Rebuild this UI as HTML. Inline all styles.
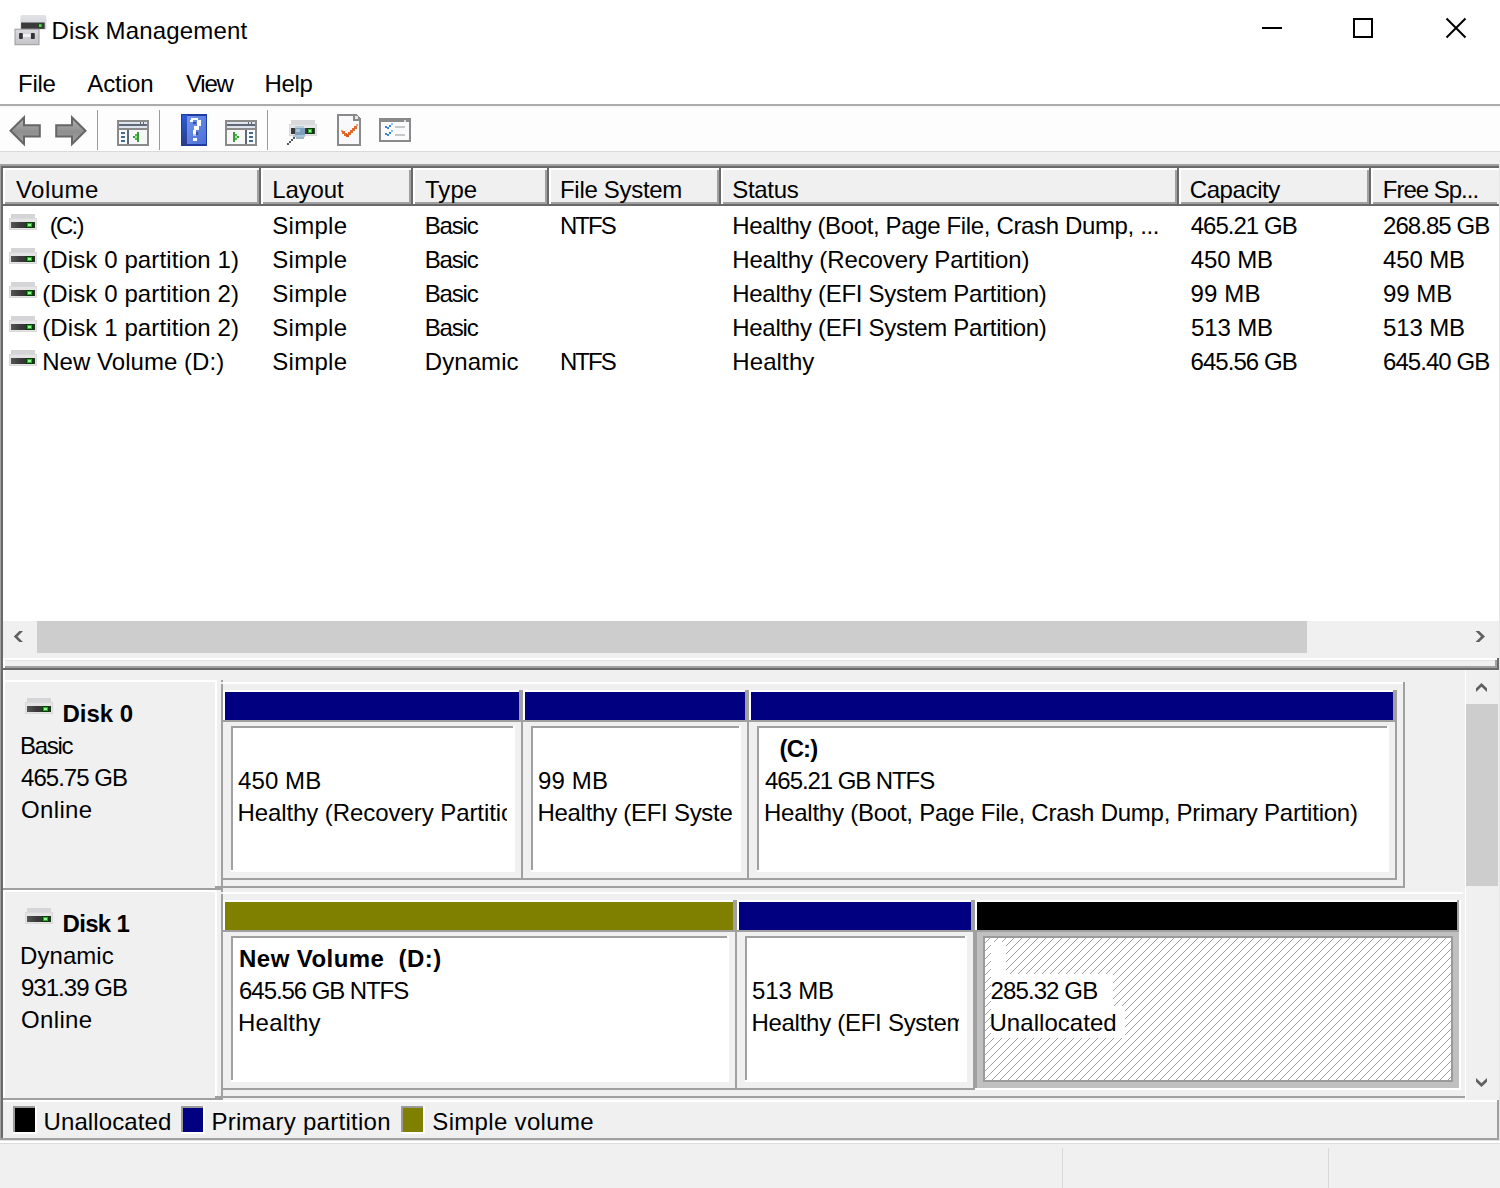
<!DOCTYPE html>
<html><head><meta charset="utf-8"><style>
html,body{margin:0;padding:0;}
body{width:1500px;height:1188px;position:relative;overflow:hidden;background:#fff;font-family:"Liberation Sans",sans-serif;font-size:24px;color:#000;}
body>div{position:absolute;}
.t{line-height:32px;white-space:pre;}
</style></head><body>
<div style="left:0px;top:0px;width:1500px;height:104px;background:#ffffff;"></div>
<svg style="position:absolute;left:14px;top:14px" width="34" height="32">
<defs><linearGradient id="tg1" x1="0" y1="0" x2="0" y2="1"><stop offset="0" stop-color="#e2e3e6"/><stop offset="1" stop-color="#cfd0d4"/></linearGradient>
<linearGradient id="tg2" x1="0" y1="0" x2="0" y2="1"><stop offset="0" stop-color="#dcdce0"/><stop offset="1" stop-color="#c4c4c8"/></linearGradient></defs>
<rect x="6.4" y="1" width="26" height="14.5" rx="1.5" fill="url(#tg1)"/>
<rect x="7.1" y="8.5" width="23.6" height="6.4" fill="#3a3a3a"/>
<rect x="24" y="9.5" width="4.5" height="4" fill="#145214"/>
<rect x="25" y="10.3" width="2.6" height="2.6" fill="#6fd66f"/>
<rect x="1" y="15.2" width="24" height="15.5" fill="url(#tg2)" stroke="#9c9c9c" stroke-width="1"/>
<rect x="9" y="20" width="8" height="3" fill="#f2f2f4"/>
<rect x="5.1" y="18.9" width="3.7" height="6.1" rx="0.8" fill="#333"/>
<rect x="16.9" y="18.9" width="3.9" height="6.1" rx="0.8" fill="#333"/>
</svg>
<div class="t" id="t0" style="left:51.50px;top:15px;letter-spacing:0.157px;">Disk Management</div>
<div style="left:1262px;top:27px;width:20px;height:2px;background:#000;"></div>
<div style="left:1353px;top:18px;width:16px;height:16px;border:2px solid #000"></div>
<svg style="position:absolute;left:1444px;top:16px" width="24" height="24"><path d="M2.5 2.5 L21.5 21.5 M21.5 2.5 L2.5 21.5" stroke="#000" stroke-width="2" fill="none"/></svg>
<div class="t" id="t1" style="left:18.10px;top:68px;letter-spacing:-0.333px;">File</div>
<div class="t" id="t2" style="left:87.30px;top:68px;letter-spacing:-0.100px;">Action</div>
<div class="t" id="t3" style="left:186.00px;top:68px;letter-spacing:-1.233px;">View</div>
<div class="t" id="t4" style="left:264.40px;top:68px;letter-spacing:-0.333px;">Help</div>
<div style="left:0px;top:104px;width:1500px;height:2px;background:#ababab;"></div>
<div style="left:0px;top:106px;width:1500px;height:45px;background:#fdfdfd;"></div>
<div style="left:0px;top:106px;width:1500px;height:2px;background:#f8f8fb;"></div>
<div style="left:0px;top:151px;width:1500px;height:1px;background:#dadada;"></div>
<div style="left:0px;top:152px;width:1500px;height:12px;background:#f0f0f0;"></div>
<div style="left:97px;top:110px;width:1px;height:40px;background:#9a9a9a;"></div>
<div style="left:159px;top:110px;width:1px;height:40px;background:#9a9a9a;"></div>
<div style="left:267px;top:110px;width:1px;height:40px;background:#9a9a9a;"></div>
<svg style="position:absolute;left:0;top:108px" width="100" height="44">
<defs><linearGradient id="ag" x1="0" y1="0" x2="0" y2="1"><stop offset="0" stop-color="#b4b4b4"/><stop offset="0.55" stop-color="#8e8e8e"/><stop offset="1" stop-color="#a8a8a8"/></linearGradient></defs>
<path d="M10.5 22.7 L24 9.5 L24 17.2 L39.8 17.2 L39.8 28.5 L24 28.5 L24 36 Z" fill="url(#ag)" stroke="#666" stroke-width="2"/>
<path d="M85.5 22.7 L72 9.5 L72 17.2 L56.2 17.2 L56.2 28.5 L72 28.5 L72 36 Z" fill="url(#ag)" stroke="#666" stroke-width="2"/>
</svg>
<svg style="position:absolute;left:117px;top:120px" width="32" height="26" shape-rendering="crispEdges"><rect x="0" y="0" width="32" height="26" fill="#8a8a8a"/><rect x="2" y="2" width="28" height="2" fill="#dfe4ec"/><rect x="23" y="2" width="1.2" height="2" fill="#5f6878"/><rect x="26.2" y="2" width="1.2" height="2" fill="#5f6878"/><rect x="2" y="4" width="28" height="2" fill="#5f6878"/><rect x="2" y="6" width="28" height="2" fill="#dfe4ec"/><rect x="2" y="10" width="8" height="14" fill="#f6f9fd"/><rect x="10" y="10" width="2" height="14" fill="#5f6878"/><rect x="12" y="10" width="18" height="14" fill="#f7f7f7"/><rect x="4" y="12" width="3.6" height="2" fill="#45698f"/><rect x="4" y="16" width="3.6" height="2" fill="#45698f"/><rect x="4" y="20" width="3.6" height="2" fill="#45698f"/><rect x="20" y="12" width="2" height="10" fill="#3c963c"/><rect x="18" y="14" width="2" height="6" fill="#4cb84c"/><rect x="16" y="16" width="2" height="2" fill="#3c963c"/><rect x="18" y="16" width="2" height="2" fill="#90ee90"/></svg>
<svg style="position:absolute;left:225px;top:120px" width="32" height="26" shape-rendering="crispEdges"><rect x="0" y="0" width="32" height="26" fill="#8a8a8a"/><rect x="2" y="2" width="28" height="2" fill="#dfe4ec"/><rect x="23" y="2" width="1.2" height="2" fill="#5f6878"/><rect x="26.2" y="2" width="1.2" height="2" fill="#5f6878"/><rect x="2" y="4" width="28" height="2" fill="#5f6878"/><rect x="2" y="6" width="28" height="2" fill="#dfe4ec"/><rect x="2" y="10" width="18" height="14" fill="#f7f7f7"/><rect x="20" y="10" width="2" height="14" fill="#5f6878"/><rect x="22" y="10" width="8" height="14" fill="#f6f9fd"/><rect x="24" y="12" width="3.6" height="2" fill="#45698f"/><rect x="24" y="16" width="3.6" height="2" fill="#45698f"/><rect x="24" y="20" width="3.6" height="2" fill="#45698f"/><rect x="8" y="12" width="2" height="10" fill="#3c963c"/><rect x="10" y="14" width="2" height="6" fill="#4cb84c"/><rect x="12" y="16" width="2" height="2" fill="#3c963c"/><rect x="10" y="16" width="2" height="2" fill="#90ee90"/></svg>
<svg style="position:absolute;left:181px;top:114px" width="26" height="32" shape-rendering="crispEdges">
<defs><linearGradient id="hg1" x1="0" y1="0" x2="0" y2="1"><stop offset="0" stop-color="#2d5ad8"/><stop offset="1" stop-color="#2a3c86"/></linearGradient>
<linearGradient id="hg2" x1="0" y1="0" x2="1" y2="1"><stop offset="0" stop-color="#7494ee"/><stop offset="1" stop-color="#4a6fd6"/></linearGradient></defs>
<rect x="0" y="0" width="26" height="32" fill="#1f3c9e"/>
<rect x="1" y="1" width="5" height="30" fill="url(#hg1)"/>
<rect x="6" y="2" width="19" height="28" fill="url(#hg2)"/>
<rect x="9.5" y="4" width="7.5" height="2" fill="#fff"/>
<rect x="9" y="6" width="3" height="2" fill="#fff"/>
<rect x="12" y="8" width="3" height="2" fill="#3b4f9a"/>
<rect x="16" y="6" width="4" height="6" fill="#fff"/>
<rect x="13" y="12" width="5" height="4" fill="#fff"/>
<rect x="12" y="16" width="3" height="4" fill="#fff"/>
<rect x="15" y="18" width="2" height="3" fill="#3b4f9a"/>
<rect x="12" y="20" width="3" height="2" fill="#b8c6f0"/>
<rect x="12" y="24" width="4" height="3" fill="#fff"/>
</svg>
<svg style="position:absolute;left:282px;top:114px" width="40" height="36" shape-rendering="crispEdges">
<rect x="9" y="6" width="24" height="4.3" fill="#d9d9dd"/>
<rect x="7" y="10.3" width="28" height="11.4" fill="#dadada"/>
<rect x="8" y="11" width="26" height="10" fill="#e6e6e8"/>
<rect x="9" y="14" width="24" height="5.7" fill="#3a3a3c"/>
<rect x="25" y="14" width="7" height="5.7" fill="#0b3d0b"/>
<rect x="26" y="15" width="4" height="3.5" fill="#2fb02f"/>
<rect x="27" y="16" width="2" height="2" fill="#8cff8c"/>
<rect x="13" y="12" width="9" height="2" fill="#b9cfe0"/>
<rect x="13" y="14" width="10" height="7" fill="#7f9fba"/>
<rect x="14" y="14.5" width="4" height="3" fill="#a8c6de"/>
<rect x="11" y="21" width="12" height="2" fill="#a9c4da"/>
<rect x="14" y="23" width="8" height="2" fill="#9fb4c4"/>
<rect x="11" y="23" width="2" height="2" fill="#555a60"/>
<rect x="9" y="25" width="2" height="2" fill="#555a60"/>
<rect x="7" y="27" width="2" height="2" fill="#555a60"/>
<rect x="5" y="29" width="2" height="2" fill="#555a60"/>
</svg>
<svg style="position:absolute;left:337px;top:114px" width="24" height="32" shape-rendering="crispEdges">
<path d="M0 0 H19.5 L24 4.5 V32 H0 Z" fill="#8a8a8a"/>
<rect x="2" y="2" width="14" height="28" fill="#f9f9fb"/>
<rect x="16" y="7" width="6" height="23" fill="#f9f9fb"/>
<rect x="18" y="2" width="3" height="3" fill="#e8e8e8"/>
<rect x="4" y="16" width="2" height="2" fill="#f0a070"/>
<rect x="5" y="17" width="3" height="3" fill="#e26a2a"/>
<rect x="7" y="19" width="3" height="3" fill="#e26a2a"/>
<rect x="9" y="20" width="3" height="3" fill="#d85a1a"/>
<rect x="11" y="18" width="3" height="3" fill="#e26a2a"/>
<rect x="13" y="16" width="3" height="3" fill="#e26a2a"/>
<rect x="15" y="14" width="3" height="3" fill="#e26a2a"/>
<rect x="17" y="12" width="3" height="3" fill="#e26a2a"/>
<rect x="19" y="10" width="2" height="2" fill="#f0a070"/>
</svg>
<svg style="position:absolute;left:379px;top:118px" width="32" height="24" shape-rendering="crispEdges">
<rect x="0" y="0" width="32" height="23.6" fill="#8a8a8a"/>
<rect x="2" y="4" width="28" height="17.6" fill="#fbfbfd"/>
<rect x="25" y="2" width="2" height="2" fill="#dcdcdc"/>
<rect x="6" y="8" width="2" height="2" fill="#3a86d4"/><rect x="8" y="9" width="2" height="2" fill="#3a86d4"/><rect x="10" y="7" width="2" height="2" fill="#3a86d4"/><rect x="12" y="5" width="2" height="2" fill="#8ec0ee"/>
<rect x="6" y="15" width="2" height="2" fill="#3a86d4"/><rect x="8" y="16" width="2" height="2" fill="#3a86d4"/><rect x="10" y="14" width="2" height="2" fill="#3a86d4"/><rect x="12" y="12" width="2" height="2" fill="#8ec0ee"/>
<rect x="16" y="8" width="10" height="2" fill="#c8c8c8"/>
<rect x="16" y="16" width="10" height="2" fill="#c8c8c8"/>
</svg>
<div style="left:0px;top:164px;width:1500px;height:2px;background:#a0a0a0;"></div>
<div style="left:0px;top:166px;width:1500px;height:2px;background:#696969;"></div>
<div style="left:0px;top:164px;width:1px;height:506px;background:#a0a0a0;"></div>
<div style="left:1px;top:166px;width:2px;height:504px;background:#696969;"></div>
<div style="left:3px;top:168px;width:1496px;height:490px;background:#ffffff;"></div>
<div style="left:1499px;top:164px;width:1px;height:1024px;background:#e6e6e6;"></div>
<div style="left:3px;top:168px;width:258px;height:38px;background:#f0f0f0;"></div>
<div style="left:3px;top:168px;width:258px;height:2px;background:#ffffff;"></div>
<div style="left:3px;top:168px;width:2px;height:38px;background:#ffffff;"></div>
<div style="left:257px;top:170px;width:2px;height:34px;background:#a0a0a0;"></div>
<div style="left:259px;top:168px;width:2px;height:38px;background:#696969;"></div>
<div style="left:5px;top:202px;width:254px;height:2px;background:#a0a0a0;"></div>
<div style="left:3px;top:204px;width:258px;height:2px;background:#696969;"></div>
<div style="left:261px;top:168px;width:152px;height:38px;background:#f0f0f0;"></div>
<div style="left:261px;top:168px;width:152px;height:2px;background:#ffffff;"></div>
<div style="left:261px;top:168px;width:2px;height:38px;background:#ffffff;"></div>
<div style="left:409px;top:170px;width:2px;height:34px;background:#a0a0a0;"></div>
<div style="left:411px;top:168px;width:2px;height:38px;background:#696969;"></div>
<div style="left:263px;top:202px;width:148px;height:2px;background:#a0a0a0;"></div>
<div style="left:261px;top:204px;width:152px;height:2px;background:#696969;"></div>
<div style="left:413px;top:168px;width:136px;height:38px;background:#f0f0f0;"></div>
<div style="left:413px;top:168px;width:136px;height:2px;background:#ffffff;"></div>
<div style="left:413px;top:168px;width:2px;height:38px;background:#ffffff;"></div>
<div style="left:545px;top:170px;width:2px;height:34px;background:#a0a0a0;"></div>
<div style="left:547px;top:168px;width:2px;height:38px;background:#696969;"></div>
<div style="left:415px;top:202px;width:132px;height:2px;background:#a0a0a0;"></div>
<div style="left:413px;top:204px;width:136px;height:2px;background:#696969;"></div>
<div style="left:549px;top:168px;width:172px;height:38px;background:#f0f0f0;"></div>
<div style="left:549px;top:168px;width:172px;height:2px;background:#ffffff;"></div>
<div style="left:549px;top:168px;width:2px;height:38px;background:#ffffff;"></div>
<div style="left:717px;top:170px;width:2px;height:34px;background:#a0a0a0;"></div>
<div style="left:719px;top:168px;width:2px;height:38px;background:#696969;"></div>
<div style="left:551px;top:202px;width:168px;height:2px;background:#a0a0a0;"></div>
<div style="left:549px;top:204px;width:172px;height:2px;background:#696969;"></div>
<div style="left:721px;top:168px;width:458px;height:38px;background:#f0f0f0;"></div>
<div style="left:721px;top:168px;width:458px;height:2px;background:#ffffff;"></div>
<div style="left:721px;top:168px;width:2px;height:38px;background:#ffffff;"></div>
<div style="left:1175px;top:170px;width:2px;height:34px;background:#a0a0a0;"></div>
<div style="left:1177px;top:168px;width:2px;height:38px;background:#696969;"></div>
<div style="left:723px;top:202px;width:454px;height:2px;background:#a0a0a0;"></div>
<div style="left:721px;top:204px;width:458px;height:2px;background:#696969;"></div>
<div style="left:1179px;top:168px;width:192px;height:38px;background:#f0f0f0;"></div>
<div style="left:1179px;top:168px;width:192px;height:2px;background:#ffffff;"></div>
<div style="left:1179px;top:168px;width:2px;height:38px;background:#ffffff;"></div>
<div style="left:1367px;top:170px;width:2px;height:34px;background:#a0a0a0;"></div>
<div style="left:1369px;top:168px;width:2px;height:38px;background:#696969;"></div>
<div style="left:1181px;top:202px;width:188px;height:2px;background:#a0a0a0;"></div>
<div style="left:1179px;top:204px;width:192px;height:2px;background:#696969;"></div>
<div style="left:1371px;top:168px;width:128px;height:38px;background:#f0f0f0;"></div>
<div style="left:1371px;top:168px;width:128px;height:2px;background:#ffffff;"></div>
<div style="left:1371px;top:168px;width:2px;height:38px;background:#ffffff;"></div>
<div style="left:1373px;top:202px;width:124px;height:2px;background:#a0a0a0;"></div>
<div style="left:1371px;top:204px;width:128px;height:2px;background:#696969;"></div>
<div class="t" id="t5" style="left:16.00px;top:174px;letter-spacing:0.440px;">Volume</div>
<div class="t" id="t6" style="left:272.20px;top:174px;letter-spacing:-0.100px;">Layout</div>
<div class="t" id="t7" style="left:425.00px;top:174px;letter-spacing:0.033px;">Type</div>
<div class="t" id="t8" style="left:560.00px;top:174px;letter-spacing:-0.300px;">File System</div>
<div class="t" id="t9" style="left:732.20px;top:174px;letter-spacing:-0.300px;">Status</div>
<div class="t" id="t10" style="left:1189.70px;top:174px;letter-spacing:-0.386px;">Capacity</div>
<div class="t" id="t11" style="left:1382.80px;top:174px;letter-spacing:-1.011px;">Free Sp...</div>
<div style="left:11px;top:214px;width:24px;height:4px;background:#d5d5d8;"></div>
<div style="left:9px;top:218px;width:28px;height:12px;background:#d9d9d9;"></div>
<div style="left:10px;top:219px;width:26px;height:10px;background:#e4e4e6;"></div>
<div style="left:11px;top:222px;width:24px;height:6px;background:#3c3c3e;background:linear-gradient(90deg,#555,#3a3a3a 40%,#2a2a2a)"></div>
<div style="left:26px;top:222px;width:7px;height:6px;background:#0c3c0c;"></div>
<div style="left:27px;top:223px;width:5px;height:4px;background:#2ea82e;"></div>
<div style="left:28px;top:224px;width:3px;height:2px;background:#8cff8c;"></div>
<div class="t" id="t12" style="left:45.00px;top:210px;letter-spacing:-1.800px;"> (C:)</div>
<div class="t" id="t13" style="left:272.20px;top:210px;letter-spacing:0.300px;">Simple</div>
<div class="t" id="t14" style="left:424.80px;top:210px;letter-spacing:-1.200px;">Basic</div>
<div class="t" id="t15" style="left:560.00px;top:210px;letter-spacing:-1.967px;">NTFS</div>
<div class="t" id="t16" style="left:732.20px;top:210px;letter-spacing:-0.355px;">Healthy (Boot, Page File, Crash Dump, ...</div>
<div class="t" id="t17" style="left:1190.70px;top:210px;letter-spacing:-0.975px;">465.21 GB</div>
<div class="t" id="t18" style="left:1383.00px;top:210px;letter-spacing:-0.937px;">268.85 GB</div>
<div style="left:11px;top:248px;width:24px;height:4px;background:#d5d5d8;"></div>
<div style="left:9px;top:252px;width:28px;height:12px;background:#d9d9d9;"></div>
<div style="left:10px;top:253px;width:26px;height:10px;background:#e4e4e6;"></div>
<div style="left:11px;top:256px;width:24px;height:6px;background:#3c3c3e;background:linear-gradient(90deg,#555,#3a3a3a 40%,#2a2a2a)"></div>
<div style="left:26px;top:256px;width:7px;height:6px;background:#0c3c0c;"></div>
<div style="left:27px;top:257px;width:5px;height:4px;background:#2ea82e;"></div>
<div style="left:28px;top:258px;width:3px;height:2px;background:#8cff8c;"></div>
<div class="t" id="t19" style="left:42.20px;top:244px;letter-spacing:0.111px;">(Disk 0 partition 1)</div>
<div class="t" id="t20" style="left:272.20px;top:244px;letter-spacing:0.300px;">Simple</div>
<div class="t" id="t21" style="left:424.80px;top:244px;letter-spacing:-1.200px;">Basic</div>
<div class="t" id="t22" style="left:732.20px;top:244px;letter-spacing:-0.107px;">Healthy (Recovery Partition)</div>
<div class="t" id="t23" style="left:1190.70px;top:244px;letter-spacing:-0.060px;">450 MB</div>
<div class="t" id="t24" style="left:1383.00px;top:244px;letter-spacing:-0.120px;">450 MB</div>
<div style="left:11px;top:282px;width:24px;height:4px;background:#d5d5d8;"></div>
<div style="left:9px;top:286px;width:28px;height:12px;background:#d9d9d9;"></div>
<div style="left:10px;top:287px;width:26px;height:10px;background:#e4e4e6;"></div>
<div style="left:11px;top:290px;width:24px;height:6px;background:#3c3c3e;background:linear-gradient(90deg,#555,#3a3a3a 40%,#2a2a2a)"></div>
<div style="left:26px;top:290px;width:7px;height:6px;background:#0c3c0c;"></div>
<div style="left:27px;top:291px;width:5px;height:4px;background:#2ea82e;"></div>
<div style="left:28px;top:292px;width:3px;height:2px;background:#8cff8c;"></div>
<div class="t" id="t25" style="left:42.20px;top:278px;letter-spacing:0.111px;">(Disk 0 partition 2)</div>
<div class="t" id="t26" style="left:272.20px;top:278px;letter-spacing:0.300px;">Simple</div>
<div class="t" id="t27" style="left:424.80px;top:278px;letter-spacing:-1.200px;">Basic</div>
<div class="t" id="t28" style="left:732.20px;top:278px;letter-spacing:-0.279px;">Healthy (EFI System Partition)</div>
<div class="t" id="t29" style="left:1190.50px;top:278px;letter-spacing:0.150px;">99 MB</div>
<div class="t" id="t30" style="left:1383.00px;top:278px;letter-spacing:-0.050px;">99 MB</div>
<div style="left:11px;top:316px;width:24px;height:4px;background:#d5d5d8;"></div>
<div style="left:9px;top:320px;width:28px;height:12px;background:#d9d9d9;"></div>
<div style="left:10px;top:321px;width:26px;height:10px;background:#e4e4e6;"></div>
<div style="left:11px;top:324px;width:24px;height:6px;background:#3c3c3e;background:linear-gradient(90deg,#555,#3a3a3a 40%,#2a2a2a)"></div>
<div style="left:26px;top:324px;width:7px;height:6px;background:#0c3c0c;"></div>
<div style="left:27px;top:325px;width:5px;height:4px;background:#2ea82e;"></div>
<div style="left:28px;top:326px;width:3px;height:2px;background:#8cff8c;"></div>
<div class="t" id="t31" style="left:42.20px;top:312px;letter-spacing:0.111px;">(Disk 1 partition 2)</div>
<div class="t" id="t32" style="left:272.20px;top:312px;letter-spacing:0.300px;">Simple</div>
<div class="t" id="t33" style="left:424.80px;top:312px;letter-spacing:-1.200px;">Basic</div>
<div class="t" id="t34" style="left:732.20px;top:312px;letter-spacing:-0.279px;">Healthy (EFI System Partition)</div>
<div class="t" id="t35" style="left:1191.00px;top:312px;letter-spacing:-0.120px;">513 MB</div>
<div class="t" id="t36" style="left:1383.00px;top:312px;letter-spacing:-0.120px;">513 MB</div>
<div style="left:11px;top:350px;width:24px;height:4px;background:#d5d5d8;"></div>
<div style="left:9px;top:354px;width:28px;height:12px;background:#d9d9d9;"></div>
<div style="left:10px;top:355px;width:26px;height:10px;background:#e4e4e6;"></div>
<div style="left:11px;top:358px;width:24px;height:6px;background:#3c3c3e;background:linear-gradient(90deg,#555,#3a3a3a 40%,#2a2a2a)"></div>
<div style="left:26px;top:358px;width:7px;height:6px;background:#0c3c0c;"></div>
<div style="left:27px;top:359px;width:5px;height:4px;background:#2ea82e;"></div>
<div style="left:28px;top:360px;width:3px;height:2px;background:#8cff8c;"></div>
<div class="t" id="t37" style="left:42.20px;top:346px;letter-spacing:0.043px;">New Volume (D:)</div>
<div class="t" id="t38" style="left:272.20px;top:346px;letter-spacing:0.300px;">Simple</div>
<div class="t" id="t39" style="left:424.80px;top:346px;letter-spacing:0.067px;">Dynamic</div>
<div class="t" id="t40" style="left:560.00px;top:346px;letter-spacing:-1.967px;">NTFS</div>
<div class="t" id="t41" style="left:732.20px;top:346px;letter-spacing:0.133px;">Healthy</div>
<div class="t" id="t42" style="left:1190.50px;top:346px;letter-spacing:-0.950px;">645.56 GB</div>
<div class="t" id="t43" style="left:1383.00px;top:346px;letter-spacing:-0.937px;">645.40 GB</div>
<div style="left:3px;top:621px;width:1496px;height:37px;background:#f0f0f0;"></div>
<div style="left:37px;top:621px;width:1270px;height:32px;background:#cdcdcd;"></div>
<div style="left:3px;top:658px;width:1496px;height:12px;background:#f0f0f0;"></div>
<div style="left:3px;top:660px;width:1492px;height:1px;background:#e3e3e3;"></div>
<div style="left:3px;top:658px;width:1494px;height:2px;background:#ffffff;"></div>
<div style="left:3px;top:658px;width:2px;height:10px;background:#ffffff;"></div>
<div style="left:1495px;top:660px;width:2px;height:8px;background:#a0a0a0;"></div>
<div style="left:1497px;top:658px;width:2px;height:12px;background:#696969;"></div>
<div style="left:5px;top:666px;width:1492px;height:2px;background:#a0a0a0;"></div>
<div style="left:3px;top:668px;width:1496px;height:2px;background:#696969;"></div>
<div style="left:0px;top:666px;width:1px;height:476px;background:#a0a0a0;"></div>
<div style="left:1px;top:668px;width:2px;height:474px;background:#696969;"></div>
<div style="left:3px;top:670px;width:1463px;height:430px;background:#f0f0f0;"></div>
<div style="left:3px;top:670px;width:2px;height:430px;background:#ffffff;"></div>
<div style="left:1465px;top:670px;width:1px;height:430px;background:#ffffff;"></div>
<div style="left:1466px;top:670px;width:33px;height:430px;background:#f0f0f0;"></div>
<div style="left:1466px;top:704px;width:32px;height:182px;background:#cdcdcd;"></div>
<svg width="0" height="0" style="position:absolute"><defs><pattern id="hat" patternUnits="userSpaceOnUse" width="8" height="8"><path d="M-1 6 L6 -1 M4 9 L9 4" stroke="#a0a0a0" stroke-width="1"/></pattern></defs></svg>
<div style="left:3px;top:680px;width:218px;height:208px;background:#f0f0f0;"></div>
<div style="left:3px;top:680px;width:214px;height:2px;background:#ffffff;"></div>
<div style="left:3px;top:680px;width:2px;height:208px;background:#ffffff;"></div>
<div style="left:215px;top:682px;width:2px;height:206px;background:#ffffff;"></div>
<div style="left:3px;top:888px;width:220px;height:2px;background:#a0a0a0;"></div>
<div style="left:215px;top:886px;width:6px;height:2px;background:#a0a0a0;"></div>
<div style="left:221px;top:684px;width:2px;height:204px;background:#a0a0a0;"></div>
<div style="left:221px;top:680px;width:2px;height:2px;background:#a0a0a0;"></div>
<div style="left:223px;top:682px;width:1180px;height:2px;background:#ffffff;"></div>
<div style="left:1403px;top:682px;width:2px;height:206px;background:#a0a0a0;"></div>
<div style="left:223px;top:886px;width:1182px;height:2px;background:#a0a0a0;"></div>
<div style="left:27px;top:698px;width:24px;height:4px;background:#d5d5d8;"></div>
<div style="left:25px;top:702px;width:28px;height:12px;background:#d9d9d9;"></div>
<div style="left:26px;top:703px;width:26px;height:10px;background:#e4e4e6;"></div>
<div style="left:27px;top:706px;width:24px;height:6px;background:#3c3c3e;background:linear-gradient(90deg,#555,#3a3a3a 40%,#2a2a2a)"></div>
<div style="left:42px;top:706px;width:7px;height:6px;background:#0c3c0c;"></div>
<div style="left:43px;top:707px;width:5px;height:4px;background:#2ea82e;"></div>
<div style="left:44px;top:708px;width:3px;height:2px;background:#8cff8c;"></div>
<div class="t" id="t44" style="left:62.50px;top:698px;letter-spacing:0.000px;font-weight:bold;">Disk 0</div>
<div class="t" id="t45" style="left:20.00px;top:730px;letter-spacing:-1.275px;">Basic</div>
<div class="t" id="t46" style="left:21.10px;top:762px;letter-spacing:-0.988px;">465.75 GB</div>
<div class="t" id="t47" style="left:20.90px;top:794px;letter-spacing:0.380px;">Online</div>
<div style="left:223px;top:690px;width:298px;height:2px;background:#ffffff;"></div>
<div style="left:223px;top:690px;width:2px;height:30px;background:#ffffff;"></div>
<div style="left:225px;top:692px;width:294px;height:28px;background:#000080;"></div>
<div style="left:519px;top:690px;width:2px;height:32px;background:#a0a0a0;"></div>
<div style="left:221px;top:720px;width:302px;height:2px;background:#a0a0a0;"></div>
<div style="left:223px;top:722px;width:298px;height:156px;background:#f0f0f0;"></div>
<div style="left:521px;top:690px;width:2px;height:190px;background:#a0a0a0;"></div>
<div style="left:223px;top:878px;width:300px;height:2px;background:#a0a0a0;"></div>
<div style="left:231px;top:726px;width:284px;height:146px;background:#ffffff;"></div>
<div style="left:231px;top:726px;width:282px;height:2px;background:#a0a0a0;"></div>
<div style="left:231px;top:726px;width:2px;height:144px;background:#a0a0a0;"></div>
<div class="t" id="t48" style="left:238.00px;top:765px;letter-spacing:0.100px;width:269.00px;overflow:hidden;">450 MB</div>
<div class="t" id="t49" style="left:237.40px;top:797px;letter-spacing:-0.070px;width:269.60px;overflow:hidden;">Healthy (Recovery Partition)</div>
<div style="left:523px;top:690px;width:224px;height:2px;background:#ffffff;"></div>
<div style="left:523px;top:690px;width:2px;height:30px;background:#ffffff;"></div>
<div style="left:525px;top:692px;width:220px;height:28px;background:#000080;"></div>
<div style="left:745px;top:690px;width:2px;height:32px;background:#a0a0a0;"></div>
<div style="left:523px;top:720px;width:226px;height:2px;background:#a0a0a0;"></div>
<div style="left:523px;top:722px;width:224px;height:156px;background:#f0f0f0;"></div>
<div style="left:747px;top:690px;width:2px;height:190px;background:#a0a0a0;"></div>
<div style="left:523px;top:878px;width:226px;height:2px;background:#a0a0a0;"></div>
<div style="left:531px;top:726px;width:210px;height:146px;background:#ffffff;"></div>
<div style="left:531px;top:726px;width:208px;height:2px;background:#a0a0a0;"></div>
<div style="left:531px;top:726px;width:2px;height:144px;background:#a0a0a0;"></div>
<div class="t" id="t50" style="left:538.00px;top:765px;letter-spacing:0.150px;width:195.00px;overflow:hidden;">99 MB</div>
<div class="t" id="t51" style="left:537.40px;top:797px;letter-spacing:-0.272px;width:195.60px;overflow:hidden;">Healthy (EFI System Partition)</div>
<div style="left:749px;top:690px;width:646px;height:2px;background:#ffffff;"></div>
<div style="left:749px;top:690px;width:2px;height:30px;background:#ffffff;"></div>
<div style="left:751px;top:692px;width:642px;height:28px;background:#000080;"></div>
<div style="left:1393px;top:690px;width:2px;height:32px;background:#a0a0a0;"></div>
<div style="left:749px;top:720px;width:648px;height:2px;background:#a0a0a0;"></div>
<div style="left:749px;top:722px;width:646px;height:156px;background:#f0f0f0;"></div>
<div style="left:1395px;top:690px;width:2px;height:190px;background:#a0a0a0;"></div>
<div style="left:749px;top:878px;width:648px;height:2px;background:#a0a0a0;"></div>
<div style="left:757px;top:726px;width:632px;height:146px;background:#ffffff;"></div>
<div style="left:757px;top:726px;width:630px;height:2px;background:#a0a0a0;"></div>
<div style="left:757px;top:726px;width:2px;height:144px;background:#a0a0a0;"></div>
<div class="t" id="t52" style="left:767.90px;top:733px;letter-spacing:-0.860px;font-weight:bold;width:613.10px;overflow:hidden;">  (C:)</div>
<div class="t" id="t53" style="left:765.10px;top:765px;letter-spacing:-1.077px;width:615.90px;overflow:hidden;">465.21 GB NTFS</div>
<div class="t" id="t54" style="left:764.00px;top:797px;letter-spacing:-0.235px;width:617.00px;overflow:hidden;">Healthy (Boot, Page File, Crash Dump, Primary Partition)</div>
<div style="left:3px;top:890px;width:218px;height:208px;background:#f0f0f0;"></div>
<div style="left:3px;top:890px;width:214px;height:2px;background:#ffffff;"></div>
<div style="left:3px;top:890px;width:2px;height:208px;background:#ffffff;"></div>
<div style="left:215px;top:892px;width:2px;height:206px;background:#ffffff;"></div>
<div style="left:3px;top:1098px;width:220px;height:2px;background:#a0a0a0;"></div>
<div style="left:215px;top:1096px;width:6px;height:2px;background:#a0a0a0;"></div>
<div style="left:221px;top:894px;width:2px;height:204px;background:#a0a0a0;"></div>
<div style="left:221px;top:890px;width:2px;height:2px;background:#a0a0a0;"></div>
<div style="left:223px;top:892px;width:1240px;height:2px;background:#ffffff;"></div>
<div style="left:223px;top:1096px;width:1242px;height:2px;background:#a0a0a0;"></div>
<div style="left:27px;top:908px;width:24px;height:4px;background:#d5d5d8;"></div>
<div style="left:25px;top:912px;width:28px;height:12px;background:#d9d9d9;"></div>
<div style="left:26px;top:913px;width:26px;height:10px;background:#e4e4e6;"></div>
<div style="left:27px;top:916px;width:24px;height:6px;background:#3c3c3e;background:linear-gradient(90deg,#555,#3a3a3a 40%,#2a2a2a)"></div>
<div style="left:42px;top:916px;width:7px;height:6px;background:#0c3c0c;"></div>
<div style="left:43px;top:917px;width:5px;height:4px;background:#2ea82e;"></div>
<div style="left:44px;top:918px;width:3px;height:2px;background:#8cff8c;"></div>
<div class="t" id="t55" style="left:62.50px;top:908px;letter-spacing:-0.680px;font-weight:bold;">Disk 1</div>
<div class="t" id="t56" style="left:20.00px;top:940px;letter-spacing:0.067px;">Dynamic</div>
<div class="t" id="t57" style="left:20.90px;top:972px;letter-spacing:-0.963px;">931.39 GB</div>
<div class="t" id="t58" style="left:20.90px;top:1004px;letter-spacing:0.380px;">Online</div>
<div style="left:223px;top:900px;width:512px;height:2px;background:#ffffff;"></div>
<div style="left:223px;top:900px;width:2px;height:30px;background:#ffffff;"></div>
<div style="left:225px;top:902px;width:508px;height:28px;background:#808000;"></div>
<div style="left:733px;top:900px;width:2px;height:32px;background:#a0a0a0;"></div>
<div style="left:221px;top:930px;width:516px;height:2px;background:#a0a0a0;"></div>
<div style="left:223px;top:932px;width:512px;height:156px;background:#f0f0f0;"></div>
<div style="left:735px;top:900px;width:2px;height:190px;background:#a0a0a0;"></div>
<div style="left:223px;top:1088px;width:514px;height:2px;background:#a0a0a0;"></div>
<div style="left:231px;top:936px;width:498px;height:146px;background:#ffffff;"></div>
<div style="left:231px;top:936px;width:496px;height:2px;background:#a0a0a0;"></div>
<div style="left:231px;top:936px;width:2px;height:144px;background:#a0a0a0;"></div>
<div class="t" id="t59" style="left:239.10px;top:943px;letter-spacing:0.433px;font-weight:bold;width:481.90px;overflow:hidden;">New Volume  (D:)</div>
<div class="t" id="t60" style="left:239.10px;top:975px;letter-spacing:-1.077px;width:481.90px;overflow:hidden;">645.56 GB NTFS</div>
<div class="t" id="t61" style="left:238.10px;top:1007px;letter-spacing:0.183px;width:482.90px;overflow:hidden;">Healthy</div>
<div style="left:737px;top:900px;width:236px;height:2px;background:#ffffff;"></div>
<div style="left:737px;top:900px;width:2px;height:30px;background:#ffffff;"></div>
<div style="left:739px;top:902px;width:232px;height:28px;background:#000080;"></div>
<div style="left:971px;top:900px;width:2px;height:32px;background:#a0a0a0;"></div>
<div style="left:737px;top:930px;width:238px;height:2px;background:#a0a0a0;"></div>
<div style="left:737px;top:932px;width:236px;height:156px;background:#f0f0f0;"></div>
<div style="left:973px;top:900px;width:2px;height:190px;background:#a0a0a0;"></div>
<div style="left:737px;top:1088px;width:238px;height:2px;background:#a0a0a0;"></div>
<div style="left:745px;top:936px;width:222px;height:146px;background:#ffffff;"></div>
<div style="left:745px;top:936px;width:220px;height:2px;background:#a0a0a0;"></div>
<div style="left:745px;top:936px;width:2px;height:144px;background:#a0a0a0;"></div>
<div class="t" id="t62" style="left:752.00px;top:975px;letter-spacing:-0.120px;width:207.00px;overflow:hidden;">513 MB</div>
<div class="t" id="t63" style="left:751.40px;top:1007px;letter-spacing:-0.272px;width:207.60px;overflow:hidden;">Healthy (EFI System Partition)</div>
<div style="left:975px;top:900px;width:484px;height:2px;background:#ffffff;"></div>
<div style="left:975px;top:900px;width:2px;height:30px;background:#ffffff;"></div>
<div style="left:977px;top:902px;width:480px;height:28px;background:#000000;"></div>
<div style="left:1457px;top:900px;width:2px;height:32px;background:#a0a0a0;"></div>
<div style="left:975px;top:930px;width:486px;height:2px;background:#a0a0a0;"></div>
<div style="left:975px;top:932px;width:484px;height:156px;background:#c0c0c0;"></div>
<div style="left:975px;top:932px;width:2px;height:156px;background:#a0a0a0;"></div>
<div style="left:1459px;top:900px;width:2px;height:190px;background:#ffffff;"></div>
<div style="left:975px;top:1088px;width:486px;height:2px;background:#ffffff;"></div>
<div style="left:983px;top:936px;width:470px;height:146px;background:#9a9a9a;"></div>
<svg style="position:absolute;left:985px;top:938px" width="466" height="142"><rect width="100%" height="100%" fill="#fff"/><rect width="100%" height="100%" fill="url(#hat)"/></svg>
<div style="left:991px;top:942px;width:15px;height:32px;background:#ffffff;"></div>
<div style="left:991px;top:974px;width:122px;height:32px;background:#ffffff;"></div>
<div style="left:991px;top:1006px;width:134px;height:32px;background:#ffffff;"></div>
<div class="t" id="t64" style="left:990.50px;top:975px;letter-spacing:-0.888px;width:454.50px;overflow:hidden;">285.32 GB</div>
<div class="t" id="t65" style="left:989.50px;top:1007px;letter-spacing:0.040px;width:455.50px;overflow:hidden;">Unallocated</div>
<svg style="position:absolute;left:0;top:0" width="1500" height="1188"><g fill="#606060"><polygon points="19.3,631 23,631 17.5,636.5 23,642 19.3,642 13.8,636.5"/><polygon points="1475.5,631 1479.2,631 1485,636.5 1479.2,642 1475.5,642 1481,636.5"/><polygon points="1476,692 1476,688.3 1481.5,683 1487,688.3 1487,692 1481.5,686.8"/><polygon points="1476,1078 1476,1081.7 1481.5,1087 1487,1081.7 1487,1078 1481.5,1083.2"/></g></svg>
<div style="left:3px;top:1100px;width:1495px;height:40px;background:#f0f0f0;"></div>
<div style="left:3px;top:1100px;width:1495px;height:2px;background:#ffffff;"></div>
<div style="left:1497px;top:1100px;width:2px;height:40px;background:#a0a0a0;"></div>
<div style="left:0px;top:1138px;width:1499px;height:2px;background:#a0a0a0;"></div>
<div style="left:13px;top:1106px;width:24px;height:28px;background:#ffffff;"></div>
<div style="left:13px;top:1106px;width:22px;height:26px;background:#9a9a9a;"></div>
<div style="left:15px;top:1108px;width:20px;height:24px;background:#000000;"></div>
<div class="t" id="t66" style="left:43.50px;top:1106px;letter-spacing:0.110px;">Unallocated</div>
<div style="left:181px;top:1106px;width:24px;height:28px;background:#ffffff;"></div>
<div style="left:181px;top:1106px;width:22px;height:26px;background:#9a9a9a;"></div>
<div style="left:183px;top:1108px;width:20px;height:24px;background:#000080;"></div>
<div class="t" id="t67" style="left:211.40px;top:1106px;letter-spacing:0.275px;">Primary partition</div>
<div style="left:401px;top:1106px;width:24px;height:28px;background:#ffffff;"></div>
<div style="left:401px;top:1106px;width:22px;height:26px;background:#9a9a9a;"></div>
<div style="left:403px;top:1108px;width:20px;height:24px;background:#808000;"></div>
<div class="t" id="t68" style="left:432.30px;top:1106px;letter-spacing:0.325px;">Simple volume</div>
<div style="left:0px;top:1140px;width:1500px;height:48px;background:#f0f0f0;"></div>
<div style="left:0px;top:1140px;width:1500px;height:1px;background:#e3e3e3;"></div>
<div style="left:0px;top:1141px;width:1500px;height:2px;background:#ffffff;"></div>
<div style="left:0px;top:1143px;width:1500px;height:1px;background:#dcdcdc;"></div>
<div style="left:1062px;top:1148px;width:1px;height:40px;background:#d9d9d9;"></div>
<div style="left:1328px;top:1148px;width:1px;height:40px;background:#d9d9d9;"></div>
</body></html>
